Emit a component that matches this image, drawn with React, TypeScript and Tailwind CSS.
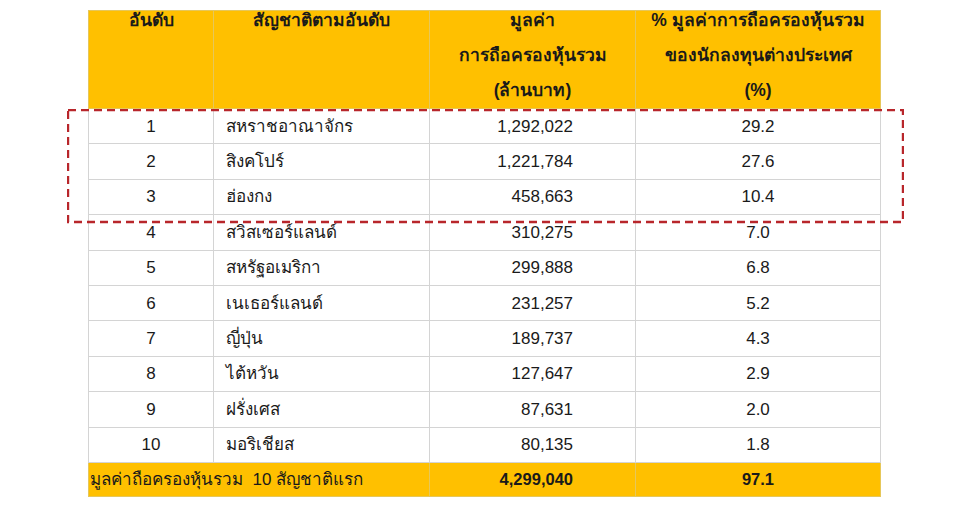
const rows = [
  { rank: 1, name: "สหราชอาณาจักร", value: "1,292,022", pct: "29.2" },
  { rank: 2, name: "สิงคโปร์", value: "1,221,784", pct: "27.6" },
  { rank: 3, name: "ฮ่องกง", value: "458,663", pct: "10.4" },
  { rank: 4, name: "สวิสเซอร์แลนด์", value: "310,275", pct: "7.0" },
  { rank: 5, name: "สหรัฐอเมริกา", value: "299,888", pct: "6.8" },
  { rank: 6, name: "เนเธอร์แลนด์", value: "231,257", pct: "5.2" },
  { rank: 7, name: "ญี่ปุ่น", value: "189,737", pct: "4.3" },
  { rank: 8, name: "ไต้หวัน", value: "127,647", pct: "2.9" },
  { rank: 9, name: "ฝรั่งเศส", value: "87,631", pct: "2.0" },
  { rank: 10, name: "มอริเชียส", value: "80,135", pct: "1.8" },
];

const cell = "border border-[#d4d4d4] p-0";
const head = "border border-[#e6c75a] p-0 align-top";

const HeadLines = ({ lines }: { lines: string[] }) => (
  <div className="-mt-[8px] flex flex-col">
    {lines.map((l) => (
      <span key={l} className="h-[35px] leading-[35px]">
        {l}
      </span>
    ))}
  </div>
);

export default function App() {
  return (
    <div className="relative h-[506px] w-[960px] bg-white pt-[10px] pl-[88px] font-['Liberation_Sans',sans-serif] text-[#1a1a1a]">
      <table className="w-[792px] table-fixed border-collapse">
        <colgroup>
          <col className="w-[125px]" />
          <col className="w-[216px]" />
          <col className="w-[206px]" />
          <col className="w-[245px]" />
        </colgroup>
        <thead>
          <tr className="h-[98px] bg-[#ffc000] text-[17.5px] font-bold">
            <th className={head}>
              <HeadLines lines={["อันดับ"]} />
            </th>
            <th className={head}>
              <HeadLines lines={["สัญชาติตามอันดับ"]} />
            </th>
            <th className={head}>
              <HeadLines lines={["มูลค่า", "การถือครองหุ้นรวม", "(ล้านบาท)"]} />
            </th>
            <th className={head}>
              <HeadLines
                lines={["% มูลค่าการถือครองหุ้นรวม", "ของนักลงทุนต่างประเทศ", "(%)"]}
              />
            </th>
          </tr>
        </thead>
        <tbody className="text-[17px] leading-none">
          {rows.map((r) => (
            <tr key={r.rank} className="h-[35.4px]">
              <td className={`${cell} text-center`}>{r.rank}</td>
              <td className={`${cell} pl-[12px]`}>{r.name}</td>
              <td className={`${cell} pr-[62px] text-right`}>{r.value}</td>
              <td className={`${cell} text-center`}>{r.pct}</td>
            </tr>
          ))}
          <tr className="h-[34px] bg-[#ffc000]">
            <td colSpan={2} className={`${cell} border-[#e6c75a] pl-[1px]`}>
              มูลค่าถือครองหุ้นรวม&nbsp;&nbsp;10 สัญชาติแรก
            </td>
            <td className={`${cell} border-[#e6c75a] pr-[62px] text-right text-[16.5px] font-bold`}>
              4,299,040
            </td>
            <td className={`${cell} border-[#e6c75a] text-center text-[16.5px] font-bold`}>
              97.1
            </td>
          </tr>
        </tbody>
      </table>

      <svg
        className="pointer-events-none absolute left-[67px] top-[109px]"
        width="837"
        height="115"
      >
        <rect
          x="1"
          y="1"
          width="835"
          height="112"
          fill="none"
          stroke="#b8262b"
          strokeWidth="2.4"
          strokeDasharray="8 5"
        />
      </svg>
    </div>
  );
}
